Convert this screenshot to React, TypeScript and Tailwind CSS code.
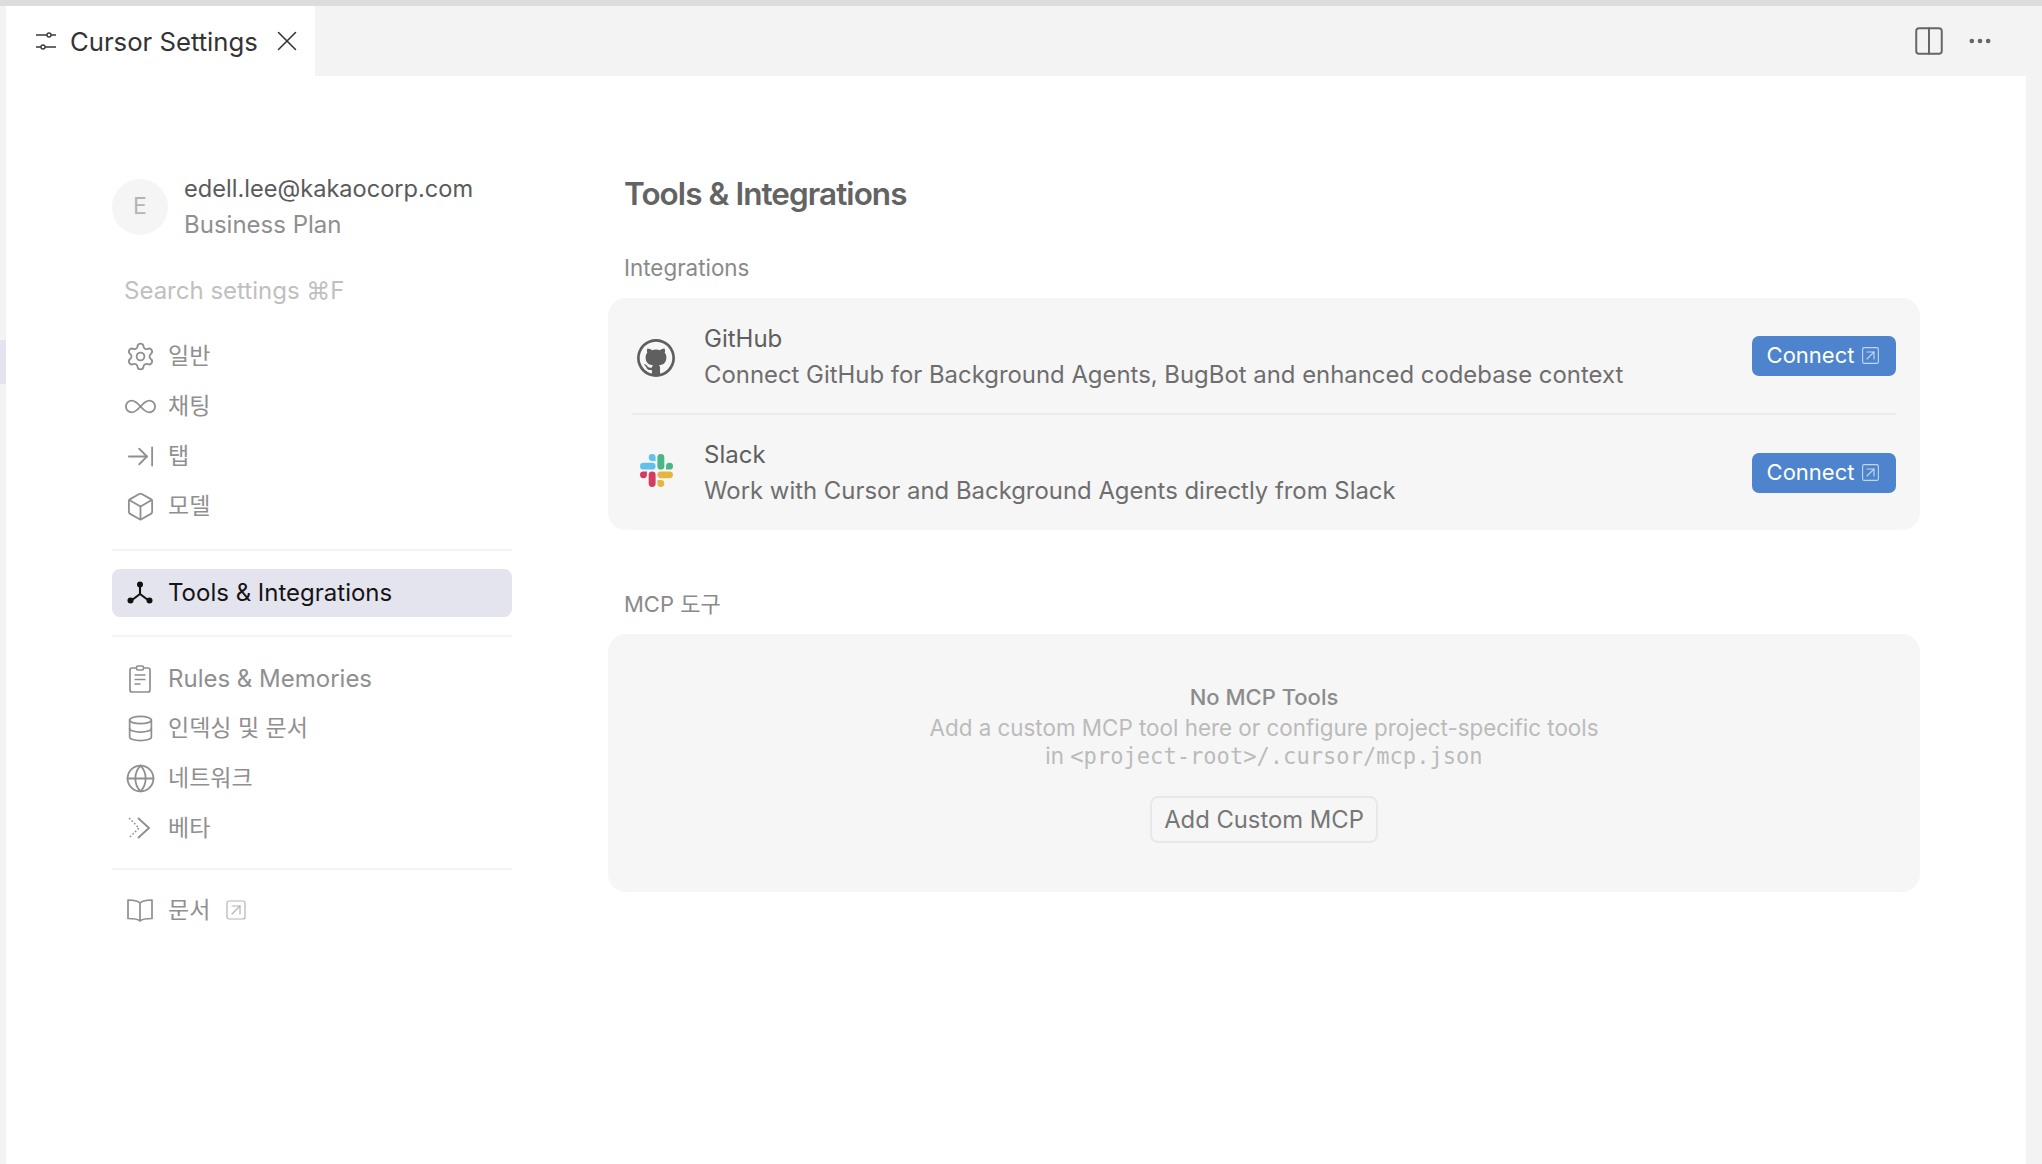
import React from "react";
import {
  ArrowRightToLine,
  Box,
  Columns2,
  Database,
  Ellipsis,
  Globe,
  Infinity as InfinityIcon,
  Settings,
  SquareArrowUpRight,
  X,
} from "lucide-react";
import { VscGithub } from "react-icons/vsc";

const font = "font-['Inter','Noto_Sans_CJK_KR',sans-serif]";

const SlidersIcon = () => (
  <svg width="22" height="22" viewBox="0 0 22 22" fill="none" stroke="#3a3a3a" strokeWidth="1.4">
    <path d="M1 5h11M16 5h5M1 17h5M10 17h11" />
    <circle cx="14" cy="5" r="2" />
    <circle cx="8" cy="17" r="2" />
  </svg>
);

const ToolsIcon = () => (
  <svg width="26" height="26" viewBox="0 0 26 26" fill="none" stroke="#111" strokeWidth="2.1">
    <path d="M13 5v9M13 14l-8 6M13 14l8 6" />
    <circle cx="13" cy="4.5" r="3" fill="#111" stroke="none" />
    <circle cx="3.500" cy="20.500" r="3" fill="#111" stroke="none" />
    <circle cx="22.500" cy="20.500" r="3" fill="#111" stroke="none" />
  </svg>
);

const RulesIcon = () => (
  <svg width="28" height="28" viewBox="0 0 28 28" fill="none" stroke="#8f8f8f" strokeWidth="1.7">
    <rect x="4" y="3" width="20" height="24" rx="2" />
    <rect x="10.500" y="1" width="7" height="4" rx="1.500" fill="#ffffff" />
    <path d="M8.500 10h11M8.500 14.500h11M8.500 19h6" />
  </svg>
);

const BetaIcon = () => (
  <svg width="28" height="28" viewBox="0 0 28 28" fill="none" stroke="#8f8f8f">
    <path d="M3 4l10 10L3 24" strokeWidth="1.4" strokeDasharray="1.800 1.800" />
    <path d="M12 4l11 10-11 10" strokeWidth="1.900" />
  </svg>
);

const BookIcon = () => (
  <svg width="28" height="28" viewBox="0 0 28 28" fill="none" stroke="#8f8f8f" strokeWidth="1.7" strokeLinejoin="round">
    <path d="M14 7C12 5 8 4 2 4v18.500c6 0 10 .5 12 2.500 2-2 6-2.500 12-2.500V4c-6 0-10 1-12 3zM14 7v18" />
  </svg>
);

const SlackIcon = () => (
  <svg width="33" height="33" viewBox="0 0 24 24" className="-mt-[5px]">
    <path fill="#d23c5f" d="M5.042 15.165a2.528 2.528 0 0 1-2.52 2.523A2.528 2.528 0 0 1 0 15.165a2.527 2.527 0 0 1 2.522-2.52h2.52v2.52zM6.313 15.165a2.527 2.527 0 0 1 2.521-2.52 2.527 2.527 0 0 1 2.521 2.52v6.313A2.528 2.528 0 0 1 8.834 24a2.528 2.528 0 0 1-2.521-2.522v-6.313z" />
    <path fill="#62c0ef" d="M8.834 5.042a2.528 2.528 0 0 1-2.521-2.52A2.528 2.528 0 0 1 8.834 0a2.528 2.528 0 0 1 2.521 2.522v2.52H8.834zM8.834 6.313a2.528 2.528 0 0 1 2.521 2.521 2.528 2.528 0 0 1-2.521 2.521H2.522A2.528 2.528 0 0 1 0 8.834a2.528 2.528 0 0 1 2.522-2.521h6.312z" />
    <path fill="#4bb685" d="M18.956 8.834a2.528 2.528 0 0 1 2.522-2.521A2.528 2.528 0 0 1 24 8.834a2.528 2.528 0 0 1-2.522 2.521h-2.522V8.834zM17.688 8.834a2.528 2.528 0 0 1-2.523 2.521 2.527 2.527 0 0 1-2.52-2.521V2.522A2.527 2.527 0 0 1 15.165 0a2.528 2.528 0 0 1 2.523 2.522v6.312z" />
    <path fill="#e5b63f" d="M15.165 18.956a2.528 2.528 0 0 1 2.523 2.522A2.528 2.528 0 0 1 15.165 24a2.527 2.527 0 0 1-2.52-2.522v-2.522h2.52zM15.165 17.688a2.527 2.527 0 0 1-2.52-2.523 2.526 2.526 0 0 1 2.52-2.52h6.313A2.527 2.527 0 0 1 24 15.165a2.528 2.528 0 0 1-2.522 2.523h-6.313z" />
  </svg>
);

const NavRow = ({ icon, label, extra, latin }: { icon: React.ReactNode; label: string; extra?: React.ReactNode; latin?: boolean }) => (
  <div className={`flex items-center text-[#8f8f8f] ${latin ? "h-[49px] text-[24px]" : "h-[50px] text-[23px]"}`}>
    <span className="flex w-[56px] justify-center">{icon}</span>
    <span>{label}</span>
    {extra}
  </div>
);

const Divider = ({ className }: { className: string }) => <div className={`h-[2px] bg-[#f3f3f3] ${className}`} />;

const iconProps = { size: 31, strokeWidth: 1.4, color: "#8f8f8f" };

const Sidebar = () => (
  <aside className="flex w-[400px] shrink-0 flex-col pt-[94px]">
    <div className="flex items-center gap-[16px]">
      <div className="flex h-[56px] w-[56px] items-center justify-center rounded-full bg-[#f5f5f5] text-[23px] text-[#b4b4b4]">
        E
      </div>
      <div className="flex flex-col pt-[1px]">
        <span className="text-[23.6px] leading-[36px] text-[#5a5a5a]">edell.lee@kakaocorp.com</span>
        <span className="text-[24px] leading-[36px] text-[#8f8f8f]">Business Plan</span>
      </div>
    </div>
    <div className="mt-[30px] mb-[22px] pl-[12px] text-[24px] leading-[36px] text-[#c0c0c0]">Search settings ⌘F</div>

    <NavRow icon={<Settings {...iconProps} />} label="일반" />
    <NavRow icon={<InfinityIcon {...iconProps} size={35} strokeWidth={1.25} />} label="채팅" />
    <NavRow icon={<ArrowRightToLine {...iconProps} />} label="탭" />
    <NavRow icon={<Box {...iconProps} />} label="모델" />

    <Divider className="mt-[18px] mb-[18px]" />
    <div className="flex h-[48px] items-center rounded-[8px] bg-[#e4e4ef] text-[24px] text-[#141414]">
      <span className="flex w-[56px] justify-center">
        <ToolsIcon />
      </span>
      Tools & Integrations
    </div>
    <Divider className="mt-[18px] mb-[17px]" />

    <NavRow icon={<RulesIcon />} label="Rules & Memories" latin />
    <NavRow icon={<Database {...iconProps} size={29} />} label="인덱싱 및 문서" />
    <NavRow icon={<Globe {...iconProps} />} label="네트워크" />
    <NavRow icon={<BetaIcon />} label="베타" />

    <Divider className="mt-[15px] mb-[15px]" />
    <NavRow
      icon={<BookIcon />}
      label="문서"
      extra={<SquareArrowUpRight size={24} strokeWidth={1.2} color="#b4b4b4" className="ml-[14px]" />}
    />
  </aside>
);

const Integration = ({ icon, name, desc, textClass }: { icon: React.ReactNode; name: string; desc: string; textClass?: string }) => (
  <div className="flex h-[115px] items-center">
    <span className="mr-[24px] flex w-[48px] justify-center">{icon}</span>
    <div className={`flex flex-1 flex-col text-[#6e6e6e] ${textClass ?? ""}`}>
      <span className="text-[24px] leading-[36px] text-[#5f5f5f]">{name}</span>
      <span className="text-[23.9px] leading-[36px]">{desc}</span>
    </div>
    <button className="flex h-[40px] w-[144px] items-center justify-center gap-[6px] rounded-[7px] bg-[#4d84cd] text-[22px] text-white">
      Connect
      <SquareArrowUpRight size={21} strokeWidth={1.3} color="#c5d7ef" />
    </button>
  </div>
);

const Main = () => (
  <main className="ml-[96px] flex w-[1312px] shrink-0 flex-col pt-[92px]">
    <h1 className="pl-[16px] text-[31.5px] leading-[52px] font-semibold tracking-[-0.95px] text-[#636363]">
      Tools & Integrations
    </h1>
    <div className="mt-[31px] pl-[16px] text-[22.4px] leading-[34px] text-[#8a8a8a]">Integrations</div>
    <section className="mt-[13px] rounded-[18px] bg-[#f6f6f6] pr-[24px] pl-[24px]">
      <Integration
        icon={<VscGithub size={38} color="#5f5f5f" className="mt-[4px]" />}
        name="GitHub"
        textClass="pt-[2px]"
        desc="Connect GitHub for Background Agents, BugBot and enhanced codebase context"
      />
      <div className="h-[2px] bg-[#ececec]" />
      <Integration
        icon={<SlackIcon />}
        name="Slack"
        desc="Work with Cursor and Background Agents directly from Slack"
      />
    </section>
    <div className="mt-[57px] pl-[16px] text-[22px] leading-[34px] text-[#8a8a8a]">MCP 도구</div>
    <section className="mt-[13px] flex h-[258px] flex-col items-center rounded-[18px] bg-[#f6f6f6] pt-[48px]">
      <div className="text-[22px] leading-[30px] font-medium text-[#8c8c8c]">No MCP Tools</div>
      <div className="mt-[2px] text-center text-[22.4px] leading-[28px] text-[#bbbbbb]">
        <div>Add a custom MCP tool here or configure project-specific tools</div>
        <div>
          in <span className="font-['DejaVu_Sans_Mono',monospace] text-[22.1px]">{"<project-root>/.cursor/mcp.json"}</span>
        </div>
      </div>
      <button className="mt-[26px] flex h-[47px] w-[228px] items-center justify-center rounded-[8px] border-2 border-[#e8e8e8] text-[23.8px] whitespace-nowrap text-[#777777]">
        Add Custom MCP
      </button>
    </section>
  </main>
);

export default function App() {
  return (
    <div className={`flex h-[1164px] w-[2042px] flex-col overflow-hidden bg-[#f3f3f3] ${font}`}>
      <div className="h-[6px] shrink-0 bg-[#dcdcdc]" />
      <div className="flex flex-1">
        <div className="relative w-[6px] shrink-0">
          <div className="absolute top-[334px] h-[44px] w-full bg-[#e4e4f0]" />
        </div>
        <div className="flex w-[2020px] flex-col">
          <div className="flex h-[70px] shrink-0 items-center">
            <div className="flex h-full w-[309px] items-center bg-white pl-[29px] text-[25.7px] text-[#333333]">
              <SlidersIcon />
              <span className="ml-[13px] pt-[2px]">Cursor Settings</span>
              <X size={34} strokeWidth={1.1} color="#333333" className="ml-[12px]" />
            </div>
            <div className="ml-auto flex items-center gap-[20px] pr-[32px]">
              <Columns2 size={34} strokeWidth={1.4} color="#666666" />
              <Ellipsis size={28} strokeWidth={2} color="#666666" />
            </div>
          </div>
          <div className="flex flex-1 bg-white pl-[106px]">
            <Sidebar />
            <Main />
          </div>
        </div>
      </div>
    </div>
  );
}
